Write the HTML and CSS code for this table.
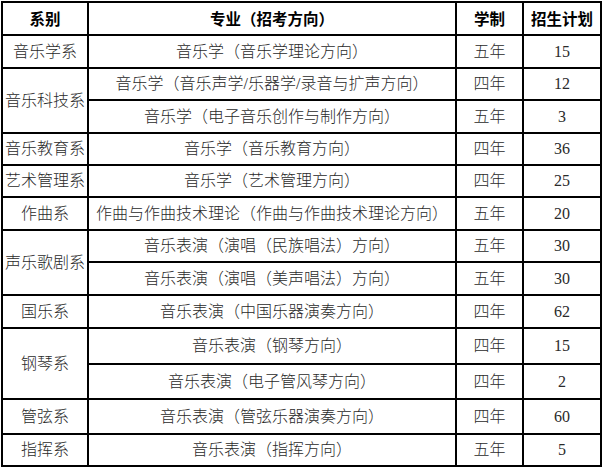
FILE: index.html
```html
<!DOCTYPE html>
<html lang="zh-CN">
<head>
<meta charset="utf-8">
<link rel="stylesheet" href="styles.css">
<title>招生计划</title>
</head>
<body>
<table class="plan">
  <colgroup>
    <col class="c1"><col class="c2"><col class="c3"><col class="c4">
  </colgroup>
  <thead>
    <tr class="h33 head">
      <th>系别</th><th>专业（招考方向）</th><th>学制</th><th>招生计划</th>
    </tr>
  </thead>
  <tbody>
    <tr class="h33"><td>音乐学系</td><td>音乐学（音乐学理论方向）</td><td>五年</td><td>15</td></tr>
    <tr class="h32"><td rowspan="2">音乐科技系</td><td>音乐学（音乐声学/乐器学/录音与扩声方向）</td><td>四年</td><td>12</td></tr>
    <tr class="h33"><td>音乐学（电子音乐创作与制作方向）</td><td>五年</td><td>3</td></tr>
    <tr class="h32"><td>音乐教育系</td><td>音乐学（音乐教育方向）</td><td>四年</td><td>36</td></tr>
    <tr class="h32"><td>艺术管理系</td><td>音乐学（艺术管理方向）</td><td>四年</td><td>25</td></tr>
    <tr class="h33"><td>作曲系</td><td>作曲与作曲技术理论（作曲与作曲技术理论方向）</td><td>五年</td><td>20</td></tr>
    <tr class="h32"><td rowspan="2">声乐歌剧系</td><td>音乐表演（演唱（民族唱法）方向）</td><td>五年</td><td>30</td></tr>
    <tr class="h33"><td>音乐表演（演唱（美声唱法）方向）</td><td>五年</td><td>30</td></tr>
    <tr class="h33"><td>国乐系</td><td>音乐表演（中国乐器演奏方向）</td><td>四年</td><td>62</td></tr>
    <tr class="h36"><td rowspan="2">钢琴系</td><td>音乐表演（钢琴方向）</td><td>四年</td><td>15</td></tr>
    <tr class="h35"><td>音乐表演（电子管风琴方向）</td><td>四年</td><td>2</td></tr>
    <tr class="h35"><td>管弦系</td><td>音乐表演（管弦乐器演奏方向）</td><td>四年</td><td>60</td></tr>
    <tr class="h32"><td>指挥系</td><td>音乐表演（指挥方向）</td><td>五年</td><td>5</td></tr>
  </tbody>
</table>
</body>
</html>
```
FILE: styles.css
```css
html, body {
  margin: 0;
  padding: 0;
  background: #ffffff;
}

body {
  padding: 1px 0 0 1px;
}

.plan {
  border-collapse: separate;
  border-spacing: 0;
  table-layout: fixed;
  width: 601px;
  border-left: 2px solid #000;
  border-top: 2px solid #000;
  font-family: "Liberation Serif", "Noto Sans CJK SC", serif;
  font-size: 16px;
  color: #2a2a2a;
}

.c1 { width: 86px; }
.c2 { width: 368px; }
.c3 { width: 67px; }
.c4 { width: 78px; }

.plan th,
.plan td {
  border-right: 2px solid #000;
  border-bottom: 2px solid #000;
  padding: 0;
  text-align: center;
  vertical-align: middle;
  white-space: nowrap;
  line-height: 1;
  box-sizing: border-box;
}

.plan td {
  font-weight: 300;
}

.plan th {
  font-family: "Noto Sans CJK SC", sans-serif;
  font-weight: 700;
  font-size: 15.5px;
  color: #000;
}

.h32 { height: 32px; }
.h33 { height: 33px; }
.h35 { height: 35px; }
.h36 { height: 36px; }
```
